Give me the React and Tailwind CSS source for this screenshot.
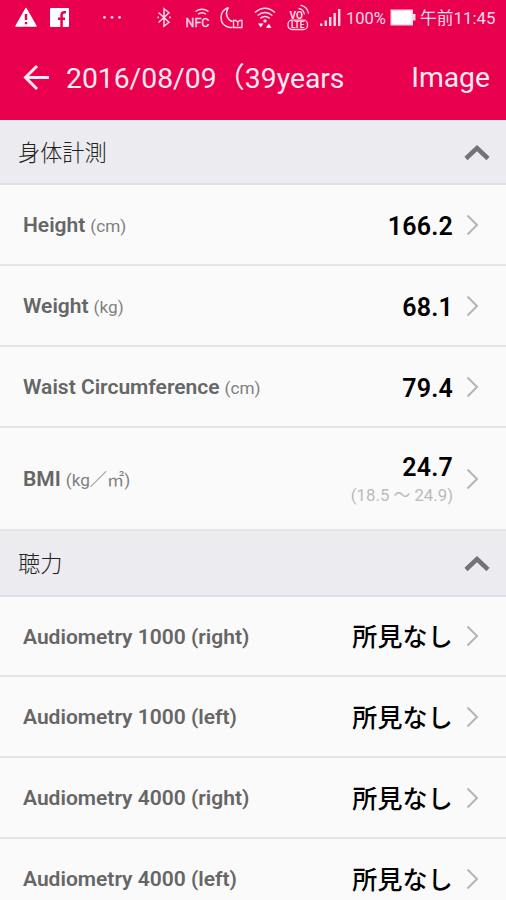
import React, { useState } from "react";

const sections = [
  {
    title: "身体計測",
    height: "h-[65px]",
    rows: [
      { label: "Height", unit: "(cm)", value: "166.2", height: "h-[81px]" },
      { label: "Weight", unit: "(kg)", value: "68.1", height: "h-[81px]" },
      { label: "Waist Circumference", unit: "(cm)", value: "79.4", height: "h-[81px]" },
      { label: "BMI", unit: "(kg／㎡)", value: "24.7", range: "(18.5 ～ 24.9)", height: "h-[103px]" },
    ],
  },
  {
    title: "聴力",
    height: "h-[66px]",
    rows: [
      { label: "Audiometry 1000 (right)", value: "所見なし", height: "h-[80px]" },
      { label: "Audiometry 1000 (left)", value: "所見なし", height: "h-[81px]" },
      { label: "Audiometry 4000 (right)", value: "所見なし", height: "h-[81px]" },
      { label: "Audiometry 4000 (left)", value: "所見なし", height: "h-[81px]" },
    ],
  },
];

const StatusBar = () => (
  <div className="flex h-9 items-center text-[#ffd9e6] whitespace-nowrap">
    {/* Warning */}
    <svg className="ml-[14px] shrink-0" width="24" height="36" viewBox="0 0 24 36">
      <path d="M12 8.5 22 26H2Z" fill="#fff" stroke="#fff" strokeWidth="1.5" strokeLinejoin="round" />
      <path d="M12 14v6M12 22v2.2" stroke="#e6004f" strokeWidth="2.4" />
    </svg>
    {/* Facebook */}
    <svg className="ml-[12px] shrink-0" width="19" height="36" viewBox="0 0 19 36">
      <rect x="0" y="8" width="19" height="19" rx="1" fill="#fff" />
      <path d="M11.6 27v-9M8 18.7h7M16 12.2h-1.6q-2.8 0-2.8 2.8v4" fill="none" stroke="#e6004f" strokeWidth="2.5" />
    </svg>
    {/* More */}
    <svg className="ml-[33px] shrink-0" width="20" height="36" viewBox="0 0 20 36" fill="currentColor">
      <circle cx="2.5" cy="17.3" r="1.4" />
      <circle cx="10" cy="17.3" r="1.4" />
      <circle cx="17.5" cy="17.3" r="1.4" />
    </svg>
    {/* Bluetooth */}
    <svg className="ml-[35px] shrink-0" width="16" height="36" viewBox="0 0 16 36" fill="none" stroke="currentColor" strokeWidth="1.5">
      <path d="M1.5 12.5 12 22.3l-5 4V8.7l5 4-10.5 9.8" />
      <path d="M.5 17.4h1.5M12 17.4h1.8" strokeWidth="1.8" />
    </svg>
    {/* NFC */}
    <svg className="ml-[12px] shrink-0 overflow-visible" width="26" height="36" viewBox="0 0 26 36" fill="none" stroke="currentColor" strokeWidth="1.5">
      <path d="M10.5 11.5q6.5-4.5 13 0M13 14.2q4-2.8 8 0" />
      <text x="0.5" y="26.5" fontFamily="Roboto, sans-serif" fontSize="12.5" fill="currentColor" strokeWidth="0.3">NFC</text>
    </svg>
    {/* Night mode */}
    <svg className="ml-[8px] shrink-0" width="24" height="36" viewBox="0 0 24 36" fill="none" stroke="currentColor" strokeWidth="1.5">
      <path d="M9.5 7.5C-.5 11-.5 25 10 27.3q2 .5 3.5 0M9.5 7.5C5.5 13 8 20 13.5 21.5" />
      <path d="M14.5 20.5h2.5l1.9 1.5 1.9-1.5h2.2V27.5h-8.5ZM18.8 22v4" strokeWidth="1.3" />
    </svg>
    {/* Wifi */}
    <svg className="ml-[11px] shrink-0" width="22" height="36" viewBox="0 0 22 36" fill="none" stroke="currentColor" strokeWidth="1.5">
      <path d="M1 12.5q10-8.5 20 0M3.6 15.5q7.4-6 14.8 0M6.3 18.3q4.7-3.5 9.4 0" />
      <circle cx="11" cy="21" r="1.7" fill="currentColor" stroke="none" />
      <path d="M4 23.5h5.500l-2.700 4ZM12 27.8h5.500L14.8 23.8Z" fill="#fff" stroke="none" />
    </svg>
    {/* VoLTE */}
    <svg className="ml-[11px] shrink-0" width="24" height="36" viewBox="0 0 24 36" fill="none" stroke="currentColor" strokeWidth="1.3">
      <text x="2.5" y="18.5" fontFamily="Roboto, sans-serif" fontSize="10.5" fontWeight="700" textLength="13.5" lengthAdjust="spacingAndGlyphs" fill="currentColor" stroke="none">VO</text>
      <path d="M11.5 8.5q5 .5 6 6M13.5 5.2q7 1.5 8 8.5" />
      <rect x="1" y="20.2" width="19.5" height="9.3" rx="4" />
      <text x="4" y="28" fontFamily="Roboto, sans-serif" fontSize="8.5" fontWeight="700" textLength="13.5" lengthAdjust="spacingAndGlyphs" fill="currentColor" stroke="none">LTE</text>
    </svg>
    {/* Signal */}
    <svg className="ml-[9px] shrink-0" width="21" height="36" viewBox="0 0 21 36" fill="currentColor">
      <path d="M0 23.5h2.4V26H0ZM4.6 20.5H7V26H4.6ZM9 17h2.4v9H9ZM13.5 13h2.4v13h-2.4ZM18 9h2.4v17H18Z" />
    </svg>
    <span className="ml-[5px] w-[40px] pt-px text-[16.5px] leading-9">100%</span>
    {/* Battery */}
    <svg className="ml-[4px] shrink-0" width="26" height="36" viewBox="0 0 26 36">
      <path d="M.5 9.5H23V14h2.5v6.5H23V25.5H.5Z" fill="#ffd9e6" />
      <path d="M2 11h19.5v13H2Z" fill="#fff" />
    </svg>
    <span className="ml-[4px] text-[16.8px] leading-9">午前11:45</span>
  </div>
);

const Row = ({ label, unit, value, range, height }) => (
  <div className={`flex items-center border-b-2 border-[#e5e5e6] bg-[#fafafa] pl-[23px] pr-[26px] ${height}`}>
    <div className="flex-1 whitespace-nowrap pt-[3px] text-[#666]">
      <span className="text-[21px] font-semibold">{label}</span>
      {unit && <span className="ml-[5px] text-[17.2px] text-[#808080]">{unit}</span>}
    </div>
    <div className="text-right text-black">
      <div className="pt-[4px] text-[25px] font-semibold leading-[30px] tracking-[0.2px]">
        {/* Kanji get too heavy at semibold */}
        <span className={value === "所見なし" ? "font-medium" : ""}>{value}</span>
      </div>
      {range && <div className="text-[16.8px] leading-[25px] text-[#bbb]">{range}</div>}
    </div>
    <svg className="ml-[13px]" width="14" height="22" viewBox="0 0 14 22" fill="none" stroke="#b4b4b4" strokeWidth="2">
      <path d="M1.5 1.5 11 11 1.5 20.5" />
    </svg>
  </div>
);

const Section = ({ title, height, rows }) => {
  const [open, setOpen] = useState(true);

  return (
    <div>
      <button
        type="button"
        onClick={() => setOpen(!open)}
        className={`flex w-full items-center justify-between border-b-2 border-[#e0e0e4] bg-[#ebebf0] pl-[18px] pr-[16px] ${height}`}
      >
        <span className="pt-[4px] text-[22.2px] font-light text-[#222]">{title}</span>
        <svg className={open ? "" : "rotate-180"} width="26" height="18" viewBox="0 0 26 18" fill="none" stroke="#737377" strokeWidth="4.5">
          <path d="M2 15.5 13 5l11 10.5" />
        </svg>
      </button>
      {open && rows.map((row) => <Row key={row.label} {...row} />)}
    </div>
  );
};

const App = () => {
  return (
    <div className="h-[900px] w-[506px] overflow-hidden bg-[#fafafa] font-[Roboto,'Noto_Sans_CJK_JP',sans-serif]">
      <div className="h-[120px] bg-[#e8004f]">
        <StatusBar />
        <div className="flex h-[84px] items-center whitespace-nowrap pl-[23px] pr-[16px] text-[28.3px] text-[#ffeaf1]">
          <svg width="28" height="28" viewBox="0 0 28 28" fill="none" stroke="currentColor" strokeWidth="3">
            <path d="M26 13.5H3M14 2 2.5 13.5 14 25" />
          </svg>
          <h1 className="ml-[15px] flex-1 pt-[2px]">2016/08/09（39years</h1>
          <button type="button">Image</button>
        </div>
      </div>

      {sections.map((section) => (
        <Section key={section.title} {...section} />
      ))}
    </div>
  );
};

export default App;
